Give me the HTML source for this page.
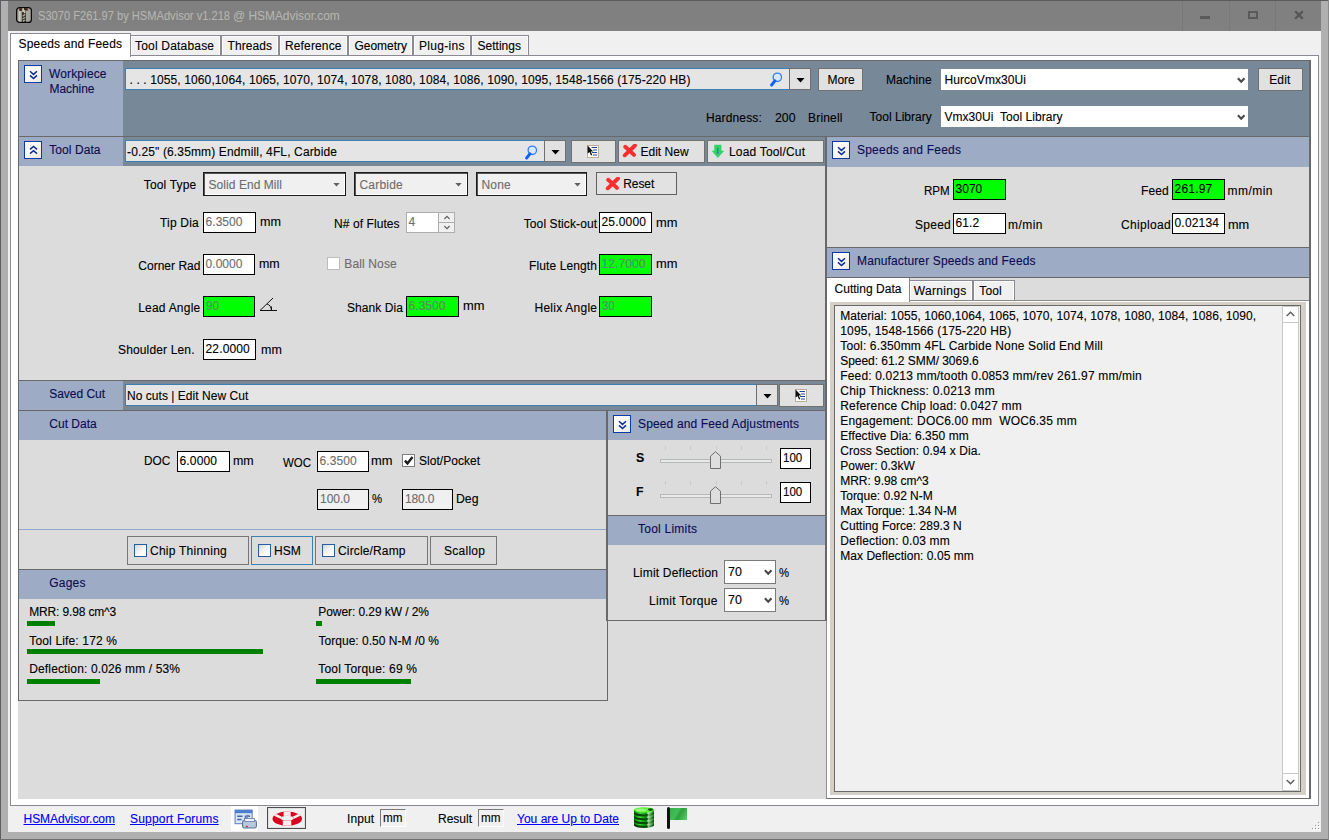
<!DOCTYPE html><html><head><meta charset="utf-8"><title>HSMAdvisor</title><style>html,body{margin:0;padding:0;}body{width:1329px;height:840px;overflow:hidden;position:relative;background:#f0f0f0;font-family:"Liberation Sans",sans-serif;font-size:12px;}body>div,body>svg,body>span{position:absolute;}.t{white-space:pre;display:block;-webkit-text-stroke:0.12px currentColor;}#t3{letter-spacing:0.19px}#t4{letter-spacing:0.078px}#t5{letter-spacing:0.141px}#t6{letter-spacing:-0.027px}#t7{letter-spacing:0.306px}#t8{letter-spacing:0.02px}#t9{letter-spacing:0.183px}#t10{letter-spacing:0.129px}#t11{letter-spacing:-0.06px}#t12{letter-spacing:0.114px}#t13{letter-spacing:-0.048px}#t14{letter-spacing:0.065px}#t15{letter-spacing:0.072px}#t16{letter-spacing:0.104px}#t17{letter-spacing:0.131px}#t19{letter-spacing:0.19px}#t20{letter-spacing:0.02px}#t21{letter-spacing:0.041px}#t22{letter-spacing:0.068px}#t23{letter-spacing:0.138px}#t24{letter-spacing:0.038px}#t25{letter-spacing:0.18px}#t26{letter-spacing:0.168px}#t27{letter-spacing:0.061px}#t28{letter-spacing:0.203px}#t29{letter-spacing:0.188px}#t30{letter-spacing:-0.09px}#t31{letter-spacing:0.195px}#t32{letter-spacing:0.059px}#t34{letter-spacing:0.024px}#t35{letter-spacing:0.059px}#t37{letter-spacing:0.215px}#t39{letter-spacing:0.147px}#t40{letter-spacing:0.152px}#t42{letter-spacing:0.082px}#t44{letter-spacing:0.13px}#t45{letter-spacing:0.078px}#t46{letter-spacing:0.059px}#t48{letter-spacing:0.094px}#t49{letter-spacing:0.185px}#t51{letter-spacing:0.116px}#t52{letter-spacing:0.102px}#t54{letter-spacing:0.245px}#t56{letter-spacing:-0.037px}#t57{letter-spacing:0.036px}#t58{letter-spacing:0.02px}#t60{letter-spacing:0.159px}#t63{letter-spacing:0.109px}#t65{letter-spacing:0.03px}#t66{letter-spacing:-0.008px}#t68{letter-spacing:-0.133px}#t70{letter-spacing:0.243px}#t72{letter-spacing:0.148px}#t73{letter-spacing:0.273px}#t74{letter-spacing:0.223px}#t75{letter-spacing:-0.154px}#t76{letter-spacing:0.157px}#t77{letter-spacing:0.134px}#t78{letter-spacing:-0.072px}#t79{letter-spacing:0.022px}#t80{letter-spacing:0.182px}#t81{letter-spacing:0.142px}#t86{letter-spacing:0.231px}#t87{letter-spacing:0.198px}#t90{letter-spacing:0.304px}#t93{letter-spacing:0.217px}#t95{letter-spacing:0.016px}#t96{letter-spacing:0.262px}#t97{letter-spacing:0.13px}#t98{letter-spacing:0.457px}#t99{letter-spacing:0.13px}#t100{letter-spacing:0.209px}#t101{letter-spacing:0.466px}#t102{letter-spacing:0.339px}#t103{letter-spacing:0.185px}#t105{letter-spacing:0.133px}#t106{letter-spacing:0.321px}#t107{letter-spacing:0.161px}#t108{letter-spacing:0.027px}#t109{letter-spacing:0.086px}#t110{letter-spacing:0.181px}#t111{letter-spacing:0.155px}#t112{letter-spacing:-0.043px}#t113{letter-spacing:0.167px}#t114{letter-spacing:0.249px}#t115{letter-spacing:0.186px}#t116{letter-spacing:0.174px}#t117{letter-spacing:0.06px}#t118{letter-spacing:0.071px}#t119{letter-spacing:-0.018px}#t120{letter-spacing:-0.038px}#t121{letter-spacing:-0.015px}#t122{letter-spacing:-0.105px}#t123{letter-spacing:0.036px}#t124{letter-spacing:0.155px}#t125{letter-spacing:0.036px}#t126{letter-spacing:-0.041px}#t127{letter-spacing:0.189px}#t128{letter-spacing:0.074px}#t132{letter-spacing:0.022px}#t1{transform:scaleX(0.8753);transform-origin:0 0}#t2{transform:scaleX(0.9393);transform-origin:0 0}#t18{transform:scaleX(1.0234);transform-origin:0 0}#t33{transform:scaleX(1.05);transform-origin:0 0}#t36{transform:scaleX(1.0375);transform-origin:0 0}#t38{transform:scaleX(0.9656);transform-origin:0 0}#t41{transform:scaleX(1.04);transform-origin:0 0}#t47{transform:scaleX(1.075);transform-origin:0 0}#t50{transform:scaleX(1.075);transform-origin:0 0}#t53{transform:scaleX(1.075);transform-origin:0 0}#t55{transform:scaleX(0.9544);transform-origin:0 0}#t59{transform:scaleX(0.9842);transform-origin:0 0}#t61{transform:scaleX(1.0375);transform-origin:0 0}#t62{transform:scaleX(0.9547);transform-origin:0 0}#t64{transform:scaleX(1.075);transform-origin:0 0}#t67{transform:scaleX(0.9464);transform-origin:0 0}#t69{transform:scaleX(1.022);transform-origin:0 0}#t71{transform:scaleX(1.0029);transform-origin:0 0}#t82{transform:scaleX(0.9206);transform-origin:0 0}#t83{transform:scaleX(0.9091);transform-origin:0 0}#t84{transform:scaleX(0.961);transform-origin:0 0}#t85{transform:scaleX(0.961);transform-origin:0 0}#t88{transform:scaleX(1.033);transform-origin:0 0}#t89{transform:scaleX(0.9464);transform-origin:0 0}#t91{transform:scaleX(1.033);transform-origin:0 0}#t92{transform:scaleX(0.9464);transform-origin:0 0}#t94{transform:scaleX(0.9654);transform-origin:0 0}#t104{transform:scaleX(1.0625);transform-origin:0 0}#t129{transform:scaleX(0.975);transform-origin:0 0}#t131{transform:scaleX(0.975);transform-origin:0 0}</style></head><body>
<div style="left:0px;top:0px;width:1329px;height:840px;background:#b0b0b0;"></div>
<div style="left:0px;top:0px;width:1329px;height:1px;background:#5c5c60;"></div>
<div style="left:0px;top:0px;width:1px;height:840px;background:#5e5e62;"></div>
<div style="left:0px;top:839px;width:1329px;height:1px;background:#6e6e6e;"></div>
<div style="left:1328px;top:0px;width:1px;height:840px;background:#8a8a8a;"></div>
<div style="left:8px;top:1px;width:1313px;height:30px;background:#808080;"></div>
<div style="left:8px;top:31px;width:1313px;height:801px;background:#f0f0f0;"></div>
<div style="left:1182px;top:1px;width:1px;height:30px;background:#787878;"></div>
<div style="left:1229px;top:1px;width:1px;height:30px;background:#787878;"></div>
<div style="left:1275px;top:1px;width:1px;height:30px;background:#787878;"></div>
<div style="left:1200px;top:15.5px;width:10px;height:3px;background:#5a5a5a;"></div>
<div style="left:1248px;top:11px;width:10px;height:8px;border:2px solid #5a5a5a;box-sizing:border-box;"></div>
<svg style="left:1294px;top:10px" width="10" height="10" viewBox="0 0 10 10"><path d="M1.2 1.2 L8.8 8.8 M8.8 1.2 L1.2 8.8" stroke="#555" stroke-width="2.3" fill="none"/></svg>
<svg style="left:16px;top:7px" width="16" height="16" viewBox="0 0 16 16"><defs><linearGradient id="ig" x1="0" x2="1"><stop offset="0" stop-color="#77776f"/><stop offset=".2" stop-color="#cdcdc6"/><stop offset=".33" stop-color="#9c9c92"/><stop offset=".37" stop-color="#30302a"/><stop offset=".61" stop-color="#3a3a32"/><stop offset=".65" stop-color="#aaaaa0"/><stop offset="1" stop-color="#a0a096"/></linearGradient></defs><rect x=".6" y=".6" width="14.8" height="14.8" rx="3" fill="url(#ig)" stroke="#0a0a0a" stroke-width="1.2"/><rect x="3.2" y="1.2" width="2.6" height="2.6" fill="#3c1c12"/><rect x="9.4" y="1.2" width="2.4" height="2.4" fill="#4a241a"/><rect x="6.3" y="1.2" width="1.6" height="4" fill="#e6d4b0"/><rect x="8" y="3.2" width="1.4" height="3" fill="#c9c9bf"/><path d="M6.6 9.2 L9.2 7.4 M6.6 12 L9.2 10.2 M6.8 14.4 L9 13" stroke="#a9a99c" stroke-width="1.3"/></svg>
<span id="t1" class="t" style="left:37.6px;top:8.7px;color:#b4b4b1;font-size:12.7px;line-height:15px;">S3070 F261.97 by HSMAdvisor v1.218</span>
<span id="t2" class="t" style="left:233px;top:8.7px;color:#b4b4b1;font-size:12.7px;line-height:15px;">@ HSMAdvisor.com</span>
<div style="left:10px;top:55px;width:1309px;height:751px;background:#ffffff;border:1px solid #8a8a92;box-sizing:border-box;"></div>
<div style="left:130px;top:35px;width:91px;height:20px;background:#f0f0f0;border:1px solid #8a8a92;box-sizing:border-box;border-bottom:none;box-shadow:inset 1px 1px 0 #fcfcfc,inset -1px 0 0 #fcfcfc;"></div>
<span id="t3" class="t" style="left:135px;top:38.5px;color:#000;font-size:12px;line-height:14px;">Tool Database</span>
<div style="left:221px;top:35px;width:58px;height:20px;background:#f0f0f0;border:1px solid #8a8a92;box-sizing:border-box;border-bottom:none;box-shadow:inset 1px 1px 0 #fcfcfc,inset -1px 0 0 #fcfcfc;"></div>
<span id="t4" class="t" style="left:227.5px;top:38.5px;color:#000;font-size:12px;line-height:14px;">Threads</span>
<div style="left:279px;top:35px;width:69px;height:20px;background:#f0f0f0;border:1px solid #8a8a92;box-sizing:border-box;border-bottom:none;box-shadow:inset 1px 1px 0 #fcfcfc,inset -1px 0 0 #fcfcfc;"></div>
<span id="t5" class="t" style="left:285px;top:38.5px;color:#000;font-size:12px;line-height:14px;">Reference</span>
<div style="left:348px;top:35px;width:65px;height:20px;background:#f0f0f0;border:1px solid #8a8a92;box-sizing:border-box;border-bottom:none;box-shadow:inset 1px 1px 0 #fcfcfc,inset -1px 0 0 #fcfcfc;"></div>
<span id="t6" class="t" style="left:354.5px;top:38.5px;color:#000;font-size:12px;line-height:14px;">Geometry</span>
<div style="left:413px;top:35px;width:58px;height:20px;background:#f0f0f0;border:1px solid #8a8a92;box-sizing:border-box;border-bottom:none;box-shadow:inset 1px 1px 0 #fcfcfc,inset -1px 0 0 #fcfcfc;"></div>
<span id="t7" class="t" style="left:419px;top:38.5px;color:#000;font-size:12px;line-height:14px;">Plug-ins</span>
<div style="left:471px;top:35px;width:58px;height:20px;background:#f0f0f0;border:1px solid #8a8a92;box-sizing:border-box;border-bottom:none;box-shadow:inset 1px 1px 0 #fcfcfc,inset -1px 0 0 #fcfcfc;"></div>
<span id="t8" class="t" style="left:477.5px;top:38.5px;color:#000;font-size:12px;line-height:14px;">Settings</span>
<div style="left:10px;top:33px;width:121px;height:24px;background:#ffffff;border:1px solid #8a8a92;box-sizing:border-box;border-bottom:none;"></div>
<span id="t9" class="t" style="left:18.5px;top:36.5px;color:#000;font-size:12px;line-height:14px;">Speeds and Feeds</span>
<div style="left:18px;top:60px;width:809px;height:739px;background:#dcdcdc;"></div>
<div style="left:827px;top:137px;width:482px;height:661px;background:#dcdcdc;"></div>
<div style="left:18px;top:60px;width:1293px;height:77px;background:#778899;"></div>
<div style="left:18px;top:60px;width:1293px;height:1px;background:#696969;"></div>
<div style="left:18px;top:60px;width:1px;height:641px;background:#696969;"></div>
<div style="left:1309px;top:60px;width:2px;height:77px;background:#696969;"></div>
<div style="left:19px;top:61px;width:104px;height:75px;background:#9eabc4;"></div>
<div style="left:18px;top:136px;width:1293px;height:1px;background:#696969;"></div>
<div style="left:24px;top:65px;width:18px;height:18px;background:linear-gradient(135deg,#fdfcfb 35%,#ebe8e0);border:1px solid #0a3aa8;box-sizing:border-box;"></div>
<svg style="left:24px;top:65px" width="18" height="18" viewBox="0 0 18 18"><path d="M6 6.2 L9.5 9.4 L13 6.2 M6 10.4 L9.5 13.6 L13 10.4" stroke="#0a2a9a" stroke-width="1.45" fill="none"/></svg>
<span id="t10" class="t" style="left:49px;top:66.5px;color:#0c0c52;font-size:12px;line-height:14px;">Workpiece</span>
<span id="t11" class="t" style="left:49.5px;top:81.5px;color:#0c0c52;font-size:12px;line-height:14px;">Machine</span>
<div style="left:125px;top:68px;width:664px;height:22px;background:#e5e5e5;border:1px solid #3c7fb1;box-sizing:border-box;border-right:none;"></div>
<span id="t12" class="t" style="left:129.5px;top:72.5px;color:#000;font-size:12px;line-height:14px;">. . . 1055, 1060,1064, 1065, 1070, 1074, 1078, 1080, 1084, 1086, 1090, 1095, 1548-1566 (175-220 HB)</span>
<svg style="left:770px;top:72px" width="13" height="15" viewBox="0 0 13 15"><circle cx="7.3" cy="5.3" r="4.2" fill="#dbe7ff" stroke="#2f7dff" stroke-width="1.3"/><path d="M4.9 8.9 L1.6 13" stroke="#0f5fff" stroke-width="2.9" stroke-linecap="round"/></svg>
<div style="left:789px;top:68px;width:22px;height:22px;background:#e1e1e1;border:1px solid #6f6f6f;box-sizing:border-box;"></div>
<svg style="left:795.5px;top:77.5px" width="9" height="5" viewBox="0 0 9 5"><path d="M0.5 0 L8.5 0 L4.5 4.6 Z" fill="#000"/></svg>
<div style="left:818px;top:68px;width:45px;height:23px;background:#e1e1e1;border:1px solid #73716d;box-sizing:border-box;"></div>
<span id="t13" class="t" style="left:827.5px;top:72.5px;color:#000;font-size:12px;line-height:14px;">More</span>
<span id="t14" class="t" style="left:886px;top:72.5px;color:#000;font-size:12px;line-height:14px;">Machine</span>
<div style="left:941px;top:69px;width:307px;height:21px;background:#ffffff;"></div>
<span id="t15" class="t" style="left:944.5px;top:72.5px;color:#000;font-size:12px;line-height:14px;">HurcoVmx30Ui</span>
<svg style="left:1236px;top:77px" width="10" height="7" viewBox="0 0 10 7"><path d="M1.9 1.3 L5.2 4.8 L8.5 1.3" stroke="#484848" stroke-width="2.1" fill="none"/></svg>
<div style="left:1258px;top:68px;width:45px;height:23px;background:#e1e1e1;border:1px solid #73716d;box-sizing:border-box;"></div>
<span id="t16" class="t" style="left:1269.25px;top:72.5px;color:#000;font-size:12px;line-height:14px;">Edit</span>
<span id="t17" class="t" style="left:706px;top:110.5px;color:#000;font-size:12px;line-height:14px;">Hardness:</span>
<span id="t18" class="t" style="left:775px;top:110.5px;color:#000;font-size:12px;line-height:14px;">200</span>
<span id="t19" class="t" style="left:808px;top:110.5px;color:#000;font-size:12px;line-height:14px;">Brinell</span>
<span id="t20" class="t" style="left:869.5px;top:110.0px;color:#000;font-size:12px;line-height:14px;">Tool Library</span>
<div style="left:941px;top:106px;width:307px;height:21px;background:#ffffff;"></div>
<span id="t21" class="t" style="left:944.5px;top:110.0px;color:#000;font-size:12px;line-height:14px;">Vmx30Ui  Tool Library</span>
<svg style="left:1236px;top:114px" width="10" height="7" viewBox="0 0 10 7"><path d="M1.9 1.3 L5.2 4.8 L8.5 1.3" stroke="#484848" stroke-width="2.1" fill="none"/></svg>
<div style="left:19px;top:137px;width:104px;height:29px;background:#9eabc4;"></div>
<div style="left:123px;top:137px;width:702px;height:29px;background:#778899;"></div>
<div style="left:24px;top:141px;width:18px;height:18px;background:linear-gradient(135deg,#fdfcfb 35%,#ebe8e0);border:1px solid #0a3aa8;box-sizing:border-box;"></div>
<svg style="left:24px;top:141px" width="18" height="18" viewBox="0 0 18 18"><path d="M6 8.4 L9.5 5.5 L13 8.4 M6 12.6 L9.5 9.7 L13 12.6" stroke="#0a2a9a" stroke-width="1.45" fill="none"/></svg>
<span id="t22" class="t" style="left:49.25px;top:142.5px;color:#0c0c52;font-size:12px;line-height:14px;">Tool Data</span>
<div style="left:125px;top:140px;width:419px;height:22px;background:#e5e5e5;border:1px solid #3c7fb1;box-sizing:border-box;border-right:none;"></div>
<span id="t23" class="t" style="left:127px;top:144.75px;color:#000;font-size:12px;line-height:14px;">-0.25&quot; (6.35mm) Endmill, 4FL, Carbide</span>
<svg style="left:525px;top:145px" width="13" height="15" viewBox="0 0 13 15"><circle cx="7.3" cy="5.3" r="4.2" fill="#dbe7ff" stroke="#2f7dff" stroke-width="1.3"/><path d="M4.9 8.9 L1.6 13" stroke="#0f5fff" stroke-width="2.9" stroke-linecap="round"/></svg>
<div style="left:544px;top:140px;width:22px;height:22px;background:#e1e1e1;border:1px solid #6f6f6f;box-sizing:border-box;"></div>
<svg style="left:550.5px;top:149.5px" width="9" height="5" viewBox="0 0 9 5"><path d="M0.5 0 L8.5 0 L4.5 4.6 Z" fill="#000"/></svg>
<div style="left:571px;top:140px;width:45px;height:23px;background:#e1e1e1;border:1px solid #73716d;box-sizing:border-box;"></div>
<svg style="left:587px;top:145px" width="12" height="13" viewBox="0 0 12 13"><rect x=".5" y=".5" width="11" height="12" fill="#fff" stroke="#bcae98"/><path d="M4.5 2.5H10M6 5H10M5 7.5H10M6 10H10" stroke="#274596" stroke-width="1"/><path d="M0.6 0.4 L0.6 8.8 L2.5 7 L4 10.6 L5.3 10 L3.8 6.6 L6.2 6.4 Z" fill="#111"/></svg>
<div style="left:618px;top:140px;width:87px;height:23px;background:#e1e1e1;border:1px solid #73716d;box-sizing:border-box;"></div>
<svg style="left:621.5px;top:144px" width="15" height="14" viewBox="0 0 15 14"><path d="M3.2 2.8 L12 10.9 M13 1.5 L2.7 11.3" stroke="#ff2e2e" stroke-width="3.9" stroke-linecap="round"/></svg>
<span id="t24" class="t" style="left:640.4px;top:144.5px;color:#000;font-size:12px;line-height:14px;">Edit New</span>
<div style="left:707px;top:140px;width:117px;height:23px;background:#e1e1e1;border:1px solid #73716d;box-sizing:border-box;"></div>
<svg style="left:711px;top:144px" width="14" height="14" viewBox="0 0 14 14"><path d="M3.3 0.8 H10.4 V6.8 H13.2 L6.8 13.9 L0.7 6.8 H3.3 Z" fill="#2fd463"/><path d="M6.7 3.8 V9.4 M5.8 9.2 H7.6" stroke="#5560e0" stroke-width="1.3"/></svg>
<span id="t25" class="t" style="left:729px;top:144.5px;color:#000;font-size:12px;line-height:14px;">Load Tool/Cut</span>
<span id="t26" class="t" style="left:143.75px;top:178.0px;color:#000;font-size:12px;line-height:14px;">Tool Type</span>
<div style="left:203px;top:172px;width:143px;height:24px;background:#f0f0f0;border:1px solid #1a1a1a;box-sizing:border-box;box-shadow:inset 1px 1px 0 #555,inset -1px -1px 0 #fff;"></div>
<span id="t27" class="t" style="left:208.5px;top:178.0px;color:#6d6d6d;font-size:12px;line-height:14px;">Solid End Mill</span>
<svg style="left:333px;top:183px" width="7" height="4" viewBox="0 0 7 4"><path d="M0.3 0 L6.7 0 L3.5 3.6 Z" fill="#606060"/></svg>
<div style="left:354px;top:172px;width:114px;height:24px;background:#f0f0f0;border:1px solid #1a1a1a;box-sizing:border-box;box-shadow:inset 1px 1px 0 #555,inset -1px -1px 0 #fff;"></div>
<span id="t28" class="t" style="left:359.5px;top:178.0px;color:#6d6d6d;font-size:12px;line-height:14px;">Carbide</span>
<svg style="left:455px;top:183px" width="7" height="4" viewBox="0 0 7 4"><path d="M0.3 0 L6.7 0 L3.5 3.6 Z" fill="#606060"/></svg>
<div style="left:476px;top:172px;width:111px;height:24px;background:#f0f0f0;border:1px solid #1a1a1a;box-sizing:border-box;box-shadow:inset 1px 1px 0 #555,inset -1px -1px 0 #fff;"></div>
<span id="t29" class="t" style="left:481.5px;top:178.0px;color:#6d6d6d;font-size:12px;line-height:14px;">None</span>
<svg style="left:574px;top:183px" width="7" height="4" viewBox="0 0 7 4"><path d="M0.3 0 L6.7 0 L3.5 3.6 Z" fill="#606060"/></svg>
<div style="left:596px;top:172px;width:81px;height:23px;background:#e2e2e2;border:1px solid #606060;box-sizing:border-box;"></div>
<svg style="left:604.5px;top:176.5px" width="15" height="14" viewBox="0 0 15 14"><path d="M3.2 2.8 L12 10.9 M13 1.5 L2.7 11.3" stroke="#ff2e2e" stroke-width="3.9" stroke-linecap="round"/></svg>
<span id="t30" class="t" style="left:623.25px;top:176.75px;color:#000;font-size:12px;line-height:14px;">Reset</span>
<span id="t31" class="t" style="left:160px;top:215.5px;color:#000;font-size:12px;line-height:14px;">Tip Dia</span>
<div style="left:203px;top:212px;width:53px;height:21px;background:#ffffff;border:1px solid #000;box-sizing:border-box;"></div>
<span id="t32" class="t" style="left:205.5px;top:214.7px;color:#6d6d6d;font-size:12px;line-height:14px;">6.3500</span>
<span id="t33" class="t" style="left:259.5px;top:214.8px;color:#000;font-size:12px;line-height:14px;">mm</span>
<span id="t34" class="t" style="left:138.25px;top:258.5px;color:#000;font-size:12px;line-height:14px;">Corner Rad</span>
<div style="left:203px;top:254px;width:52px;height:21px;background:#ffffff;border:1px solid #000;box-sizing:border-box;"></div>
<span id="t35" class="t" style="left:205.5px;top:256.7px;color:#6d6d6d;font-size:12px;line-height:14px;">0.0000</span>
<span id="t36" class="t" style="left:258.75px;top:256.55px;color:#000;font-size:12px;line-height:14px;">mm</span>
<span id="t37" class="t" style="left:138.2px;top:301.0px;color:#000;font-size:12px;line-height:14px;">Lead Angle</span>
<div style="left:203px;top:296px;width:52px;height:21px;background:#00ff00;border:1px solid #000;box-sizing:border-box;"></div>
<span id="t38" class="t" style="left:205.5px;top:298.7px;color:#5a8a6c;font-size:12px;line-height:14px;">90</span>
<svg style="left:259px;top:297px" width="19" height="15" viewBox="0 0 19 15"><path d="M14 1 L1 13.5 H18 M12.5 13.5 V9.5 M8 7 Q12 8 12.5 13.5" stroke="#111" stroke-width="1" fill="none"/></svg>
<span id="t39" class="t" style="left:118px;top:342.5px;color:#000;font-size:12px;line-height:14px;">Shoulder Len.</span>
<div style="left:203px;top:339px;width:53px;height:21px;background:#ffffff;border:1px solid #000;box-sizing:border-box;"></div>
<span id="t40" class="t" style="left:205.5px;top:341.7px;color:#000;font-size:12px;line-height:14px;">22.0000</span>
<span id="t41" class="t" style="left:260.7px;top:342.8px;color:#000;font-size:12px;line-height:14px;">mm</span>
<span id="t42" class="t" style="left:334px;top:216.75px;color:#000;font-size:12px;line-height:14px;">N# of Flutes</span>
<div style="left:406px;top:212px;width:49px;height:21px;background:#ffffff;border:1px solid #adadad;box-sizing:border-box;"></div>
<span id="t43" class="t" style="left:408.6px;top:215.0px;color:#6d6d6d;font-size:12px;line-height:14px;">4</span>
<div style="left:438px;top:213px;width:16px;height:19px;background:#f0f0f0;border:1px solid #adadad;box-sizing:border-box;border-top:none;border-right:none;border-bottom:none;"></div>
<div style="left:439px;top:222px;width:15px;height:1px;background:#adadad;"></div>
<svg style="left:442.5px;top:215px" width="8" height="5" viewBox="0 0 8 5"><path d="M1.4 4 L4 1.3 L6.6 4" stroke="#606060" stroke-width="1.15" fill="none"/></svg>
<svg style="left:442.5px;top:224.5px" width="8" height="5" viewBox="0 0 8 5"><path d="M1.4 1 L4 3.7 L6.6 1" stroke="#606060" stroke-width="1.15" fill="none"/></svg>
<div style="left:327px;top:257px;width:13px;height:13px;background:#ffffff;border:1px solid #bcbcbc;box-sizing:border-box;"></div>
<span id="t44" class="t" style="left:344.3px;top:256.7px;color:#6d6d6d;font-size:12px;line-height:14px;">Ball Nose</span>
<span id="t45" class="t" style="left:347px;top:300.5px;color:#000;font-size:12px;line-height:14px;">Shank Dia</span>
<div style="left:406px;top:296px;width:53px;height:21px;background:#00ff00;border:1px solid #000;box-sizing:border-box;"></div>
<span id="t46" class="t" style="left:408.5px;top:298.7px;color:#5a8a6c;font-size:12px;line-height:14px;">6.3500</span>
<span id="t47" class="t" style="left:462.5px;top:298.55px;color:#000;font-size:12px;line-height:14px;">mm</span>
<span id="t48" class="t" style="left:523.75px;top:216.75px;color:#000;font-size:12px;line-height:14px;">Tool Stick-out</span>
<div style="left:599px;top:212px;width:53px;height:21px;background:#ffffff;border:1px solid #000;box-sizing:border-box;"></div>
<span id="t49" class="t" style="left:601.5px;top:214.7px;color:#000;font-size:12px;line-height:14px;">25.0000</span>
<span id="t50" class="t" style="left:655.5px;top:215.8px;color:#000;font-size:12px;line-height:14px;">mm</span>
<span id="t51" class="t" style="left:529px;top:258.75px;color:#000;font-size:12px;line-height:14px;">Flute Length</span>
<div style="left:599px;top:254px;width:53px;height:21px;background:#00ff00;border:1px solid #000;box-sizing:border-box;"></div>
<span id="t52" class="t" style="left:601.5px;top:256.7px;color:#5a8a6c;font-size:12px;line-height:14px;">12.7000</span>
<span id="t53" class="t" style="left:655.5px;top:256.55px;color:#000;font-size:12px;line-height:14px;">mm</span>
<span id="t54" class="t" style="left:534.5px;top:300.5px;color:#000;font-size:12px;line-height:14px;">Helix Angle</span>
<div style="left:599px;top:296px;width:53px;height:21px;background:#00ff00;border:1px solid #000;box-sizing:border-box;"></div>
<span id="t55" class="t" style="left:601.5px;top:298.7px;color:#5a8a6c;font-size:12px;line-height:14px;">30</span>
<div style="left:18px;top:380px;width:808px;height:1px;background:#696969;"></div>
<div style="left:19px;top:381px;width:104px;height:29px;background:#9eabc4;"></div>
<div style="left:123px;top:381px;width:702px;height:29px;background:#778899;"></div>
<div style="left:18px;top:410px;width:808px;height:1px;background:#696969;"></div>
<span id="t56" class="t" style="left:49.25px;top:386.75px;color:#0c0c52;font-size:12px;line-height:14px;">Saved Cut</span>
<div style="left:125px;top:384px;width:631px;height:22px;background:#e5e5e5;border:1px solid #3c7fb1;box-sizing:border-box;border-right:none;"></div>
<span id="t57" class="t" style="left:127px;top:388.5px;color:#000;font-size:12px;line-height:14px;">No cuts | Edit New Cut</span>
<div style="left:756px;top:384px;width:22px;height:22px;background:#e1e1e1;border:1px solid #6f6f6f;box-sizing:border-box;"></div>
<svg style="left:762.5px;top:393.5px" width="9" height="5" viewBox="0 0 9 5"><path d="M0.5 0 L8.5 0 L4.5 4.6 Z" fill="#000"/></svg>
<div style="left:779px;top:384px;width:45px;height:23px;background:#e1e1e1;border:1px solid #73716d;box-sizing:border-box;"></div>
<svg style="left:795px;top:389px" width="12" height="13" viewBox="0 0 12 13"><rect x=".5" y=".5" width="11" height="12" fill="#fff" stroke="#bcae98"/><path d="M4.5 2.5H10M6 5H10M5 7.5H10M6 10H10" stroke="#274596" stroke-width="1"/><path d="M0.6 0.4 L0.6 8.8 L2.5 7 L4 10.6 L5.3 10 L3.8 6.6 L6.2 6.4 Z" fill="#111"/></svg>
<div style="left:19px;top:411px;width:588px;height:29px;background:#9eabc4;"></div>
<span id="t58" class="t" style="left:49.25px;top:416.75px;color:#0c0c52;font-size:12px;line-height:14px;">Cut Data</span>
<span id="t59" class="t" style="left:144.25px;top:453.5px;color:#000;font-size:12px;line-height:14px;">DOC</span>
<div style="left:177px;top:451px;width:53px;height:21px;background:#ffffff;border:1px solid #000;box-sizing:border-box;"></div>
<span id="t60" class="t" style="left:179.5px;top:453.7px;color:#000;font-size:12px;line-height:14px;">6.0000</span>
<span id="t61" class="t" style="left:232.5px;top:454.3px;color:#000;font-size:12px;line-height:14px;">mm</span>
<span id="t62" class="t" style="left:282.5px;top:455.5px;color:#000;font-size:12px;line-height:14px;">WOC</span>
<div style="left:317px;top:451px;width:52px;height:21px;background:#ffffff;border:1px solid #000;box-sizing:border-box;"></div>
<span id="t63" class="t" style="left:319.5px;top:453.7px;color:#6d6d6d;font-size:12px;line-height:14px;">6.3500</span>
<span id="t64" class="t" style="left:371px;top:454.2px;color:#000;font-size:12px;line-height:14px;">mm</span>
<div style="left:402px;top:454px;width:13px;height:13px;background:#ffffff;border:1px solid #7f7f7f;box-sizing:border-box;"></div>
<svg style="left:402px;top:454px" width="13" height="13" viewBox="0 0 13 13"><path d="M2.9 6.6 L5.5 9.4 L10.5 3.1" stroke="#1a1a1a" stroke-width="2.4" fill="none"/></svg>
<span id="t65" class="t" style="left:419px;top:453.75px;color:#000;font-size:12px;line-height:14px;">Slot/Pocket</span>
<div style="left:317px;top:489px;width:52px;height:21px;background:#f0f0f0;border:1px solid #000;box-sizing:border-box;"></div>
<span id="t66" class="t" style="left:320px;top:491.7px;color:#6d6d6d;font-size:12px;line-height:14px;">100.0</span>
<span id="t67" class="t" style="left:371.75px;top:492.25px;color:#000;font-size:12px;line-height:14px;">%</span>
<div style="left:402px;top:489px;width:51px;height:21px;background:#f0f0f0;border:1px solid #000;box-sizing:border-box;"></div>
<span id="t68" class="t" style="left:405px;top:491.7px;color:#6d6d6d;font-size:12px;line-height:14px;">180.0</span>
<span id="t69" class="t" style="left:455.5px;top:492.25px;color:#000;font-size:12px;line-height:14px;">Deg</span>
<div style="left:19px;top:529px;width:588px;height:1px;background:#8fa8cc;"></div>
<div style="left:127px;top:536px;width:122px;height:29px;border:1px solid #767676;box-sizing:border-box;"></div>
<div style="left:134px;top:544px;width:13px;height:13px;background:linear-gradient(135deg,#d8d8d8,#ffffff 70%);border:1px solid #2b5c96;box-sizing:border-box;"></div>
<span id="t70" class="t" style="left:150px;top:543.75px;color:#000;font-size:12px;line-height:14px;">Chip Thinning</span>
<div style="left:251px;top:536px;width:62px;height:29px;border:1px solid #3c7fb1;box-sizing:border-box;"></div>
<div style="left:257.5px;top:544px;width:13px;height:13px;background:linear-gradient(135deg,#d8d8d8,#ffffff 70%);border:1px solid #2b5c96;box-sizing:border-box;"></div>
<span id="t71" class="t" style="left:274px;top:543.75px;color:#000;font-size:12px;line-height:14px;">HSM</span>
<div style="left:315px;top:536px;width:113px;height:29px;border:1px solid #767676;box-sizing:border-box;"></div>
<div style="left:321.75px;top:544px;width:13px;height:13px;background:linear-gradient(135deg,#d8d8d8,#ffffff 70%);border:1px solid #2b5c96;box-sizing:border-box;"></div>
<span id="t72" class="t" style="left:338px;top:543.75px;color:#000;font-size:12px;line-height:14px;">Circle/Ramp</span>
<div style="left:430px;top:536px;width:67px;height:29px;border:1px solid #767676;box-sizing:border-box;"></div>
<span id="t73" class="t" style="left:444px;top:543.75px;color:#000;font-size:12px;line-height:14px;">Scallop</span>
<div style="left:18px;top:569px;width:590px;height:1px;background:#696969;"></div>
<div style="left:19px;top:570px;width:588px;height:29px;background:#9eabc4;"></div>
<span id="t74" class="t" style="left:49.25px;top:575.5px;color:#0c0c52;font-size:12px;line-height:14px;">Gages</span>
<span id="t75" class="t" style="left:29.25px;top:604.75px;color:#000;font-size:12px;line-height:14px;">MRR: 9.98 cm^3</span>
<div style="left:27px;top:621px;width:28px;height:5px;background:#008000;"></div>
<span id="t76" class="t" style="left:29.25px;top:633.75px;color:#000;font-size:12px;line-height:14px;">Tool Life: 172 %</span>
<div style="left:27px;top:649px;width:236px;height:5px;background:#008000;"></div>
<span id="t77" class="t" style="left:29.25px;top:661.75px;color:#000;font-size:12px;line-height:14px;">Deflection: 0.026 mm / 53%</span>
<div style="left:27px;top:679px;width:73px;height:5px;background:#008000;"></div>
<span id="t78" class="t" style="left:318.25px;top:604.75px;color:#000;font-size:12px;line-height:14px;">Power: 0.29 kW / 2%</span>
<div style="left:316px;top:621px;width:6px;height:5px;background:#008000;"></div>
<span id="t79" class="t" style="left:318.5px;top:633.75px;color:#000;font-size:12px;line-height:14px;">Torque: 0.50 N-M /0 %</span>
<span id="t80" class="t" style="left:318.25px;top:661.75px;color:#000;font-size:12px;line-height:14px;">Tool Torque: 69 %</span>
<div style="left:316px;top:679px;width:95px;height:5px;background:#008000;"></div>
<div style="left:18px;top:700px;width:590px;height:1px;background:#696969;"></div>
<div style="left:607px;top:411px;width:1px;height:290px;background:#696969;"></div>
<div style="left:606px;top:411px;width:1px;height:210px;background:#696969;"></div>
<div style="left:608px;top:411px;width:217px;height:29px;background:#9eabc4;"></div>
<div style="left:613px;top:415px;width:18px;height:18px;background:linear-gradient(135deg,#fdfcfb 35%,#ebe8e0);border:1px solid #0a3aa8;box-sizing:border-box;"></div>
<svg style="left:613px;top:415px" width="18" height="18" viewBox="0 0 18 18"><path d="M6 6.2 L9.5 9.4 L13 6.2 M6 10.4 L9.5 13.6 L13 10.4" stroke="#0a2a9a" stroke-width="1.45" fill="none"/></svg>
<span id="t81" class="t" style="left:638px;top:416.75px;color:#0c0c52;font-size:12px;line-height:14px;">Speed and Feed Adjustments</span>
<span id="t82" class="t" style="left:635.75px;top:450.2px;color:#000;font-size:13.5px;line-height:16px;font-weight:bold;">S</span>
<span id="t83" class="t" style="left:636.3px;top:484.2px;color:#000;font-size:13.5px;line-height:16px;font-weight:bold;">F</span>
<div style="left:665.0px;top:446px;width:1px;height:4px;background:#cbcbcb;"></div>
<div style="left:690.0px;top:446px;width:1px;height:4px;background:#cbcbcb;"></div>
<div style="left:715.5px;top:446px;width:1px;height:4px;background:#cbcbcb;"></div>
<div style="left:741.0px;top:446px;width:1px;height:4px;background:#cbcbcb;"></div>
<div style="left:765.5px;top:446px;width:1px;height:4px;background:#cbcbcb;"></div>
<div style="left:660px;top:459px;width:112px;height:4px;background:#e7eaea;border:1px solid #b8b8b8;box-sizing:border-box;"></div>
<svg style="left:710px;top:450.5px" width="11" height="18" viewBox="0 0 11 18"><path d="M0.5 5.2 L5.5 0.7 L10.5 5.2 L10.5 17.5 L0.5 17.5 Z" fill="#dedede" stroke="#6f6f6f"/></svg>
<div style="left:780px;top:448px;width:31px;height:21px;background:#ffffff;border:1px solid #000;box-sizing:border-box;"></div>
<span id="t84" class="t" style="left:783.25px;top:450.7px;color:#000;font-size:12px;line-height:14px;">100</span>
<div style="left:665.0px;top:481px;width:1px;height:4px;background:#cbcbcb;"></div>
<div style="left:690.0px;top:481px;width:1px;height:4px;background:#cbcbcb;"></div>
<div style="left:715.5px;top:481px;width:1px;height:4px;background:#cbcbcb;"></div>
<div style="left:741.0px;top:481px;width:1px;height:4px;background:#cbcbcb;"></div>
<div style="left:765.5px;top:481px;width:1px;height:4px;background:#cbcbcb;"></div>
<div style="left:660px;top:494px;width:112px;height:4px;background:#e7eaea;border:1px solid #b8b8b8;box-sizing:border-box;"></div>
<svg style="left:710px;top:485.5px" width="11" height="18" viewBox="0 0 11 18"><path d="M0.5 5.2 L5.5 0.7 L10.5 5.2 L10.5 17.5 L0.5 17.5 Z" fill="#dedede" stroke="#6f6f6f"/></svg>
<div style="left:780px;top:482px;width:31px;height:21px;background:#ffffff;border:1px solid #000;box-sizing:border-box;"></div>
<span id="t85" class="t" style="left:783.25px;top:484.7px;color:#000;font-size:12px;line-height:14px;">100</span>
<div style="left:607px;top:515px;width:219px;height:1px;background:#696969;"></div>
<div style="left:608px;top:516px;width:217px;height:29px;background:#9eabc4;"></div>
<span id="t86" class="t" style="left:638px;top:521.75px;color:#0c0c52;font-size:12px;line-height:14px;">Tool Limits</span>
<span id="t87" class="t" style="left:633px;top:566.0px;color:#000;font-size:12px;line-height:14px;">Limit Deflection</span>
<div style="left:724px;top:560px;width:52px;height:24px;background:#ffffff;border:1px solid #7a7a7a;box-sizing:border-box;"></div>
<span id="t88" class="t" style="left:727.6px;top:565.3px;color:#000;font-size:12px;line-height:14px;">70</span>
<svg style="left:763px;top:569.0px" width="10" height="7" viewBox="0 0 10 7"><path d="M1.9 1.3 L5.2 4.8 L8.5 1.3" stroke="#484848" stroke-width="2.1" fill="none"/></svg>
<span id="t89" class="t" style="left:778.75px;top:565.5px;color:#000;font-size:12px;line-height:14px;">%</span>
<span id="t90" class="t" style="left:649px;top:593.75px;color:#000;font-size:12px;line-height:14px;">Limit Torque</span>
<div style="left:724px;top:588px;width:52px;height:24px;background:#ffffff;border:1px solid #7a7a7a;box-sizing:border-box;"></div>
<span id="t91" class="t" style="left:727.6px;top:593.3px;color:#000;font-size:12px;line-height:14px;">70</span>
<svg style="left:763px;top:597.0px" width="10" height="7" viewBox="0 0 10 7"><path d="M1.9 1.3 L5.2 4.8 L8.5 1.3" stroke="#484848" stroke-width="2.1" fill="none"/></svg>
<span id="t92" class="t" style="left:778.75px;top:593.5px;color:#000;font-size:12px;line-height:14px;">%</span>
<div style="left:607px;top:620px;width:219px;height:1px;background:#696969;"></div>
<div style="left:825px;top:137px;width:2px;height:484px;background:#696969;"></div>
<div style="left:826px;top:621px;width:1px;height:178px;background:#8e8e98;"></div>
<div style="left:827px;top:137px;width:482px;height:30px;background:#9eabc4;"></div>
<div style="left:832px;top:141px;width:18px;height:18px;background:linear-gradient(135deg,#fdfcfb 35%,#ebe8e0);border:1px solid #0a3aa8;box-sizing:border-box;"></div>
<svg style="left:832px;top:141px" width="18" height="18" viewBox="0 0 18 18"><path d="M6 6.2 L9.5 9.4 L13 6.2 M6 10.4 L9.5 13.6 L13 10.4" stroke="#0a2a9a" stroke-width="1.45" fill="none"/></svg>
<span id="t93" class="t" style="left:857px;top:142.5px;color:#0c0c52;font-size:12px;line-height:14px;">Speeds and Feeds</span>
<span id="t94" class="t" style="left:923.75px;top:183.5px;color:#000;font-size:12px;line-height:14px;">RPM</span>
<div style="left:953px;top:179px;width:53px;height:21px;background:#00ff00;border:1px solid #000;box-sizing:border-box;"></div>
<span id="t95" class="t" style="left:955.5px;top:181.7px;color:#000;font-size:12px;line-height:14px;">3070</span>
<span id="t96" class="t" style="left:915px;top:217.5px;color:#000;font-size:12px;line-height:14px;">Speed</span>
<div style="left:953px;top:213px;width:53px;height:21px;background:#ffffff;border:1px solid #000;box-sizing:border-box;"></div>
<span id="t97" class="t" style="left:955.5px;top:215.7px;color:#000;font-size:12px;line-height:14px;">61.2</span>
<span id="t98" class="t" style="left:1008px;top:217.8px;color:#000;font-size:12px;line-height:14px;">m/min</span>
<span id="t99" class="t" style="left:1141px;top:183.75px;color:#000;font-size:12px;line-height:14px;">Feed</span>
<div style="left:1172px;top:179px;width:53px;height:21px;background:#00ff00;border:1px solid #000;box-sizing:border-box;"></div>
<span id="t100" class="t" style="left:1174.5px;top:181.7px;color:#000;font-size:12px;line-height:14px;">261.97</span>
<span id="t101" class="t" style="left:1227.5px;top:184.05px;color:#000;font-size:12px;line-height:14px;">mm/min</span>
<span id="t102" class="t" style="left:1121px;top:217.5px;color:#000;font-size:12px;line-height:14px;">Chipload</span>
<div style="left:1172px;top:213px;width:53px;height:21px;background:#ffffff;border:1px solid #000;box-sizing:border-box;"></div>
<span id="t103" class="t" style="left:1174.5px;top:215.7px;color:#000;font-size:12px;line-height:14px;">0.02134</span>
<span id="t104" class="t" style="left:1227.5px;top:217.8px;color:#000;font-size:12px;line-height:14px;">mm</span>
<div style="left:827px;top:247px;width:482px;height:1px;background:#696969;"></div>
<div style="left:827px;top:248px;width:482px;height:29px;background:#9eabc4;"></div>
<div style="left:832px;top:252px;width:18px;height:18px;background:linear-gradient(135deg,#fdfcfb 35%,#ebe8e0);border:1px solid #0a3aa8;box-sizing:border-box;"></div>
<svg style="left:832px;top:252px" width="18" height="18" viewBox="0 0 18 18"><path d="M6 6.2 L9.5 9.4 L13 6.2 M6 10.4 L9.5 13.6 L13 10.4" stroke="#0a2a9a" stroke-width="1.45" fill="none"/></svg>
<span id="t105" class="t" style="left:857px;top:253.75px;color:#0c0c52;font-size:12px;line-height:14px;">Manufacturer Speeds and Feeds</span>
<div style="left:827px;top:277px;width:482px;height:1px;background:#696969;"></div>
<div style="left:1309px;top:137px;width:2px;height:662px;background:#696969;"></div>
<div style="left:827px;top:798px;width:484px;height:1px;background:#696969;"></div>
<div style="left:827px;top:300px;width:482px;height:498px;background:#ffffff;border:1px solid #8a8a92;box-sizing:border-box;border-left:none;border-bottom:none;border-right:none;"></div>
<div style="left:909px;top:280px;width:64px;height:20px;background:#f0f0f0;border:1px solid #8a8a92;box-sizing:border-box;border-bottom:none;box-shadow:inset 1px 1px 0 #fcfcfc,inset -1px 0 0 #fcfcfc;"></div>
<span id="t106" class="t" style="left:913.75px;top:283.75px;color:#000;font-size:12px;line-height:14px;">Warnings</span>
<div style="left:973px;top:280px;width:42px;height:20px;background:#f0f0f0;border:1px solid #8a8a92;box-sizing:border-box;border-bottom:none;box-shadow:inset 1px 1px 0 #fcfcfc,inset -1px 0 0 #fcfcfc;"></div>
<span id="t107" class="t" style="left:979.25px;top:283.75px;color:#000;font-size:12px;line-height:14px;">Tool</span>
<div style="left:827px;top:278px;width:83px;height:24px;background:#ffffff;border-right:1px solid #85858d;box-sizing:border-box;"></div>
<span id="t108" class="t" style="left:834.5px;top:282.0px;color:#000;font-size:12px;line-height:14px;">Cutting Data</span>
<div style="left:830px;top:302px;width:476px;height:493px;background:#d4d0c8;"></div>
<div style="left:834px;top:305px;width:467px;height:487px;background:#f0f0f0;border:1px solid #696969;box-sizing:border-box;"></div>
<div style="left:1282px;top:306px;width:17px;height:485px;background:#ffffff;border:1px solid #c8c8c8;box-sizing:border-box;"></div>
<div style="left:1282px;top:306px;width:17px;height:17px;background:#ffffff;border:1px solid #c8c8c8;box-sizing:border-box;"></div>
<div style="left:1282px;top:773px;width:17px;height:18px;background:#ffffff;border:1px solid #c8c8c8;box-sizing:border-box;"></div>
<svg style="left:1286px;top:311px" width="9" height="6" viewBox="0 0 9 6"><path d="M0.7 5 L4.5 1.2 L8.3 5" stroke="#5a5a5a" stroke-width="1.35" fill="none"/></svg>
<svg style="left:1286px;top:779px" width="9" height="6" viewBox="0 0 9 6"><path d="M0.7 1 L4.5 4.8 L8.3 1" stroke="#5a5a5a" stroke-width="1.35" fill="none"/></svg>
<span id="t109" class="t" style="left:840.25px;top:308.75px;color:#000;font-size:12px;line-height:14px;">Material: 1055, 1060,1064, 1065, 1070, 1074, 1078, 1080, 1084, 1086, 1090,</span>
<span id="t110" class="t" style="left:840.25px;top:323.75px;color:#000;font-size:12px;line-height:14px;">1095, 1548-1566 (175-220 HB)</span>
<span id="t111" class="t" style="left:840.25px;top:338.75px;color:#000;font-size:12px;line-height:14px;">Tool: 6.350mm 4FL Carbide None Solid End Mill</span>
<span id="t112" class="t" style="left:840.25px;top:353.75px;color:#000;font-size:12px;line-height:14px;">Speed: 61.2 SMM/ 3069.6</span>
<span id="t113" class="t" style="left:840.25px;top:368.75px;color:#000;font-size:12px;line-height:14px;">Feed: 0.0213 mm/tooth 0.0853 mm/rev 261.97 mm/min</span>
<span id="t114" class="t" style="left:840.25px;top:383.75px;color:#000;font-size:12px;line-height:14px;">Chip Thickness: 0.0213 mm</span>
<span id="t115" class="t" style="left:840.25px;top:398.75px;color:#000;font-size:12px;line-height:14px;">Reference Chip load: 0.0427 mm</span>
<span id="t116" class="t" style="left:840.25px;top:413.75px;color:#000;font-size:12px;line-height:14px;">Engagement: DOC6.00 mm  WOC6.35 mm</span>
<span id="t117" class="t" style="left:840.25px;top:428.75px;color:#000;font-size:12px;line-height:14px;">Effective Dia: 6.350 mm</span>
<span id="t118" class="t" style="left:840.25px;top:443.75px;color:#000;font-size:12px;line-height:14px;">Cross Section: 0.94 x Dia.</span>
<span id="t119" class="t" style="left:840.25px;top:458.75px;color:#000;font-size:12px;line-height:14px;">Power: 0.3kW</span>
<span id="t120" class="t" style="left:840.25px;top:473.75px;color:#000;font-size:12px;line-height:14px;">MRR: 9.98 cm^3</span>
<span id="t121" class="t" style="left:840.25px;top:488.75px;color:#000;font-size:12px;line-height:14px;">Torque: 0.92 N-M</span>
<span id="t122" class="t" style="left:840.25px;top:503.75px;color:#000;font-size:12px;line-height:14px;">Max Torque: 1.34 N-M</span>
<span id="t123" class="t" style="left:840.25px;top:518.75px;color:#000;font-size:12px;line-height:14px;">Cutting Force: 289.3 N</span>
<span id="t124" class="t" style="left:840.25px;top:533.75px;color:#000;font-size:12px;line-height:14px;">Deflection: 0.03 mm</span>
<span id="t125" class="t" style="left:840.25px;top:548.75px;color:#000;font-size:12px;line-height:14px;">Max Deflection: 0.05 mm</span>
<span id="t126" class="t" style="left:23.5px;top:811.5px;color:#0000ff;font-size:12px;line-height:14px;text-decoration:underline;">HSMAdvisor.com</span>
<span id="t127" class="t" style="left:130px;top:811.5px;color:#0000ff;font-size:12px;line-height:14px;text-decoration:underline;">Support Forums</span>
<div style="left:231px;top:806px;width:27px;height:25px;background:#ffffff;"></div>
<svg style="left:234px;top:808.5px" width="23.5" height="21" viewBox="0 0 22 20" preserveAspectRatio="none"><rect x="1" y="1" width="16" height="13" fill="#dbe6f5" stroke="#5f84c0"/><rect x="1" y="1" width="16" height="3" fill="#4a7fd0"/><path d="M3 7H8M3 10H7M10 7H15" stroke="#44649c" stroke-width="1.4"/><path d="M9 9 L13 5 L14.5 6.5 L11 10.5 Z" fill="#6a87b8"/><rect x="8" y="11" width="13" height="7" rx="1.5" fill="#b9c7dc" stroke="#56709c"/><rect x="10" y="9" width="9" height="3" fill="#eef2f8" stroke="#56709c" stroke-width=".7"/><rect x="11" y="16" width="2" height="1.5" fill="#e03030"/></svg>
<div style="left:267px;top:807px;width:39px;height:22px;background:#f0f0f0;border:1px solid #4c4c4c;box-sizing:border-box;box-shadow:inset 0 0 0 1px #e0e0e0;"></div>
<svg style="left:271.5px;top:810.7px" width="30.5" height="15.6" viewBox="0 0 31 17" preserveAspectRatio="none"><defs><clipPath id="lb"><path clip-rule="evenodd" d="M15.5 0.6 A15 7.8 0 1 0 15.5 16.2 A15 7.8 0 1 0 15.5 0.6 Z M15.5 5.2 A6.6 2.7 0 1 1 15.5 10.6 A6.6 2.7 0 1 1 15.5 5.2 Z"/></clipPath></defs><g clip-path="url(#lb)"><rect width="31" height="17" fill="#dc0020"/><path d="M11.8 0 H19 V6 H11.8 Z M11 10 H19.6 V17 H11 Z" fill="#f7eeee"/><path d="M0 4.2 L2.5 2.2 L10.5 6.6 L9 8.6 Z M31 4.2 L28.5 2.2 L20.5 6.6 L22 8.6 Z" fill="#f7eeee"/><path d="M0 13 Q15.5 20 31 13 V17 H0 Z" fill="#a80018" opacity=".45"/></g></svg>
<span id="t128" class="t" style="left:347px;top:812.0px;color:#000;font-size:12px;line-height:14px;">Input</span>
<div style="left:380px;top:809px;width:26px;height:18px;background:#f0f0f0;border:1px solid #fff;box-sizing:border-box;border-top-color:#7a7a7a;border-left-color:#7a7a7a;"></div>
<span id="t129" class="t" style="left:383px;top:811.3px;color:#000;font-size:12px;line-height:14px;">mm</span>
<span id="t130" class="t" style="left:438px;top:812.0px;color:#000;font-size:12px;line-height:14px;">Result</span>
<div style="left:478px;top:809px;width:26px;height:18px;background:#f0f0f0;border:1px solid #fff;box-sizing:border-box;border-top-color:#7a7a7a;border-left-color:#7a7a7a;"></div>
<span id="t131" class="t" style="left:481px;top:811.3px;color:#000;font-size:12px;line-height:14px;">mm</span>
<span id="t132" class="t" style="left:517px;top:811.5px;color:#0000ff;font-size:12px;line-height:14px;text-decoration:underline;">You are Up to Date</span>
<svg style="left:633px;top:807px" width="22" height="21" viewBox="0 0 22 21"><defs><linearGradient id="dg" x1="0" x2="1"><stop offset="0" stop-color="#0c7a0c"/><stop offset=".3" stop-color="#2fe02f"/><stop offset=".62" stop-color="#0f8a0f"/><stop offset=".7" stop-color="#bfeabf"/><stop offset="1" stop-color="#1c7a1c"/></linearGradient><linearGradient id="dk" x1="0" x2="1"><stop offset="0" stop-color="#063f06"/><stop offset=".66" stop-color="#0a4f0a"/><stop offset=".72" stop-color="#7fc07f"/><stop offset="1" stop-color="#0a4a0a"/></linearGradient></defs><path d="M1 15.6 v2.6 a10 2.8 0 0 0 20 0 v-2.6 Z" fill="url(#dk)"/><path d="M1 14.2 v1.8 a10 2.8 0 0 0 20 0 v-1.8 Z" fill="url(#dg)"/><path d="M1 11.8 v2.6 a10 2.8 0 0 0 20 0 v-2.6 Z" fill="url(#dk)"/><path d="M1 10.4 v1.8 a10 2.8 0 0 0 20 0 v-1.8 Z" fill="url(#dg)"/><path d="M1 8 v2.6 a10 2.8 0 0 0 20 0 v-2.6 Z" fill="url(#dk)"/><path d="M1 6.6 v1.8 a10 2.8 0 0 0 20 0 v-1.8 Z" fill="url(#dg)"/><path d="M1 4.2 v2.6 a10 2.8 0 0 0 20 0 v-2.6 Z" fill="url(#dk)"/><path d="M1 2.8000000000000003 v1.8 a10 2.8 0 0 0 20 0 v-1.8 Z" fill="url(#dg)"/><ellipse cx="11" cy="3" rx="10" ry="2.7" fill="#5df03c"/><ellipse cx="8" cy="3" rx="5" ry="1.6" fill="#b8f890" opacity=".7"/><ellipse cx="17.5" cy="2.6" rx="2.6" ry="1.4" fill="#0a5a0a"/></svg>
<div style="left:667px;top:807px;width:3px;height:22px;background:#111111;border-radius:1.5px;"></div>
<div style="left:670px;top:808px;width:17px;height:12px;background:linear-gradient(120deg,#35b04a,#3fbf55 40%,#2f9e3f 55%,#56d468);"></div>
<div style="left:1318px;top:822px;width:1px;height:1px;background:#9a9a9a;"></div>
<div style="left:1319px;top:823px;width:1px;height:1px;background:#ffffff;"></div>
<div style="left:1315px;top:825px;width:1px;height:1px;background:#9a9a9a;"></div>
<div style="left:1316px;top:826px;width:1px;height:1px;background:#ffffff;"></div>
<div style="left:1318px;top:825px;width:1px;height:1px;background:#9a9a9a;"></div>
<div style="left:1319px;top:826px;width:1px;height:1px;background:#ffffff;"></div>
<div style="left:1312px;top:828px;width:1px;height:1px;background:#9a9a9a;"></div>
<div style="left:1313px;top:829px;width:1px;height:1px;background:#ffffff;"></div>
<div style="left:1315px;top:828px;width:1px;height:1px;background:#9a9a9a;"></div>
<div style="left:1316px;top:829px;width:1px;height:1px;background:#ffffff;"></div>
<div style="left:1318px;top:828px;width:1px;height:1px;background:#9a9a9a;"></div>
<div style="left:1319px;top:829px;width:1px;height:1px;background:#ffffff;"></div>
</body></html>
